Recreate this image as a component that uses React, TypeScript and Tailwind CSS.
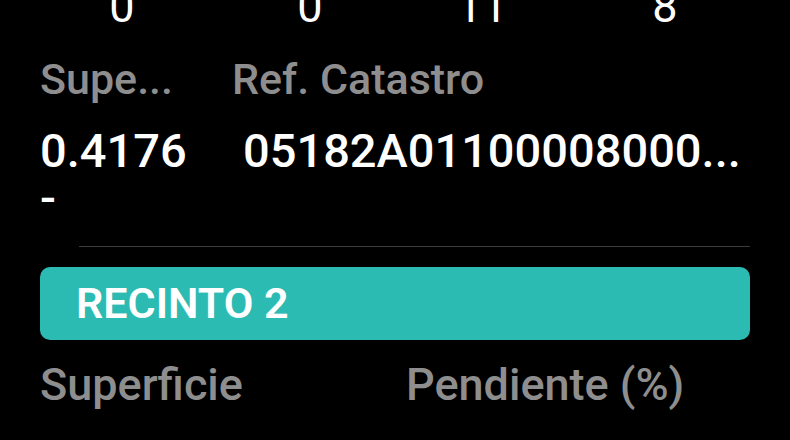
const font = { fontFamily: 'Roboto, "Liberation Sans", Arial, sans-serif' };

const counts = [
  { value: "0", width: "w-[164px]" },
  { value: "0", width: "w-[212px]" },
  { value: "11", width: "w-[132px]" },
  { value: "8", width: "w-[234px]" },
];

export default function App() {
  return (
    <div className="w-[790px] h-[440px] overflow-hidden bg-black text-white" style={font}>
      <div className="px-[40px]">
        {/* counters row, cut at the top */}
        <div className="-mt-[15px] flex h-[44px] text-[45px] leading-[44px]">
          {counts.map((c, i) => (
            <div key={i} className={`${c.width} shrink-0 text-center`}>
              {c.value}
            </div>
          ))}
        </div>

        <div className="mt-[29px] flex h-[43px] text-[43px] font-medium leading-[43px] text-[#8e8e8e]">
          <p className="w-[192px] shrink-0">Supe...</p>
          <p>Ref. Catastro</p>
        </div>

        <div className="mt-[26px] flex text-[47px] font-medium leading-[47px]">
          <p className="w-[150px] shrink-0">0.4176 -</p>
          <p className="ml-[53px] whitespace-nowrap">05182A01100008000...</p>
        </div>

        <div className="mt-[25px] ml-[39px] h-px bg-[#3c3c3e]" />

        <div className="mt-[20px] flex h-[73px] items-center rounded-[10px] bg-[#2cbbb3] pl-[36px]">
          <span className="text-[43px] font-semibold leading-none">RECINTO 2</span>
        </div>

        <div className="mt-[22px] flex h-[45px] text-[45px] font-medium leading-[45px] text-[#8e8e8e]">
          <p className="w-[366px] shrink-0">Superficie</p>
          <p>Pendiente (%)</p>
        </div>
      </div>
    </div>
  );
}
